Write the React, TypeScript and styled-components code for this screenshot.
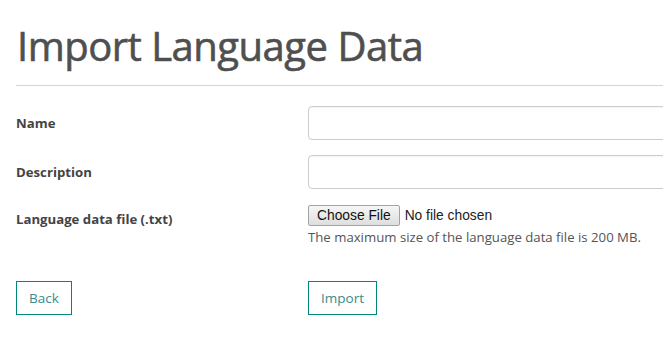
import styled, { createGlobalStyle } from 'styled-components';

const GlobalStyle = createGlobalStyle`
  html, body {
    margin: 0;
    padding: 0;
    background: #fff;
    overflow: hidden;
  }
  body {
    font-family: "Open Sans", "Noto Sans", sans-serif;
    color: #333;
  }
`;

const App: React.FC = () => {
  return (
    <>
      <GlobalStyle />
      <Page>
        <Title>Import Language Data</Title>
        <Divider />
        <Form>
          <Row>
            <Label>Name</Label>
            <TextInput type="text" />
          </Row>
          <Row>
            <Label>Description</Label>
            <TextInput type="text" />
          </Row>
          <Row $top>
            <Label $offset={7}>Language data file (.txt)</Label>
            <FileField>
              <FileInput type="file" accept=".txt" />
              <Help>The maximum size of the language data file is 200 MB.</Help>
            </FileField>
          </Row>
          <Actions>
            <ButtonCell>
              <OutlineButton type="button">Back</OutlineButton>
            </ButtonCell>
            <OutlineButton type="submit">Import</OutlineButton>
          </Actions>
        </Form>
      </Page>
    </>
  );
};
export default App;

const Page = styled.div`
  padding: 18px 0 0 16px;
  width: 900px;
`;

const Title = styled.h1`
  margin: 0 0 0 1px;
  font-size: 40px;
  font-weight: 400;
  line-height: 56px;
  color: #4f4f4f;
  letter-spacing: -0.5px;
  -webkit-text-stroke: 0.6px #4f4f4f;
`;

const Divider = styled.hr`
  margin: 11px 0 0;
  border: 0;
  border-top: 1px solid #d5d5d5;
`;

const Form = styled.form`
  display: flex;
  flex-direction: column;
  gap: 15px;
  padding-top: 20px;
`;

const Row = styled.div<{ $top?: boolean }>`
  display: grid;
  grid-template-columns: 292px 420px;
  align-items: ${(p) => (p.$top ? 'start' : 'center')};
`;

const Label = styled.label<{ $offset?: number }>`
  font-size: 13.2px;
  font-weight: 700;
  color: #444;
  padding-top: ${(p) => p.$offset ?? 0}px;
  margin-top: -1px;
`;

const TextInput = styled.input`
  box-sizing: border-box;
  height: 34px;
  width: 100%;
  border: 1px solid #ccc;
  border-radius: 4px;
  padding: 6px 12px;
  font-size: 14px;
  outline: none;
  box-shadow: inset 0 1px 1px rgba(0, 0, 0, 0.04);
`;

const FileField = styled.div`
  display: flex;
  flex-direction: column;
  gap: 2px;
  padding-top: 1px;
`;

const FileInput = styled.input`
  font-family: "Liberation Sans", Arial, sans-serif;
  font-size: 13.8px;
  color: #222;

  &::file-selector-button {
    font-family: "Liberation Sans", Arial, sans-serif;
    font-size: 13.8px;
    height: 21px;
    padding: 0 8px;
    margin-right: 5px;
    border: 1px solid #a3a3a3;
    border-radius: 2px;
    background: linear-gradient(#f6f6f6, #dedede);
    color: #111;
  }
`;

const Help = styled.span`
  font-size: 13.2px;
  color: #555;
`;

const Actions = styled.div`
  display: flex;
  align-items: center;
  padding-top: 20px;
`;

const ButtonCell = styled.div`
  width: 292px;
`;

const OutlineButton = styled.button`
  box-sizing: border-box;
  height: 34px;
  padding: 0 12px;
  background: #fff;
  border: 1px solid #00897b;
  border-radius: 0;
  color: #3a8a8c;
  font-family: "Open Sans", "Noto Sans", sans-serif;
  font-size: 13.5px;
  cursor: pointer;
`;
